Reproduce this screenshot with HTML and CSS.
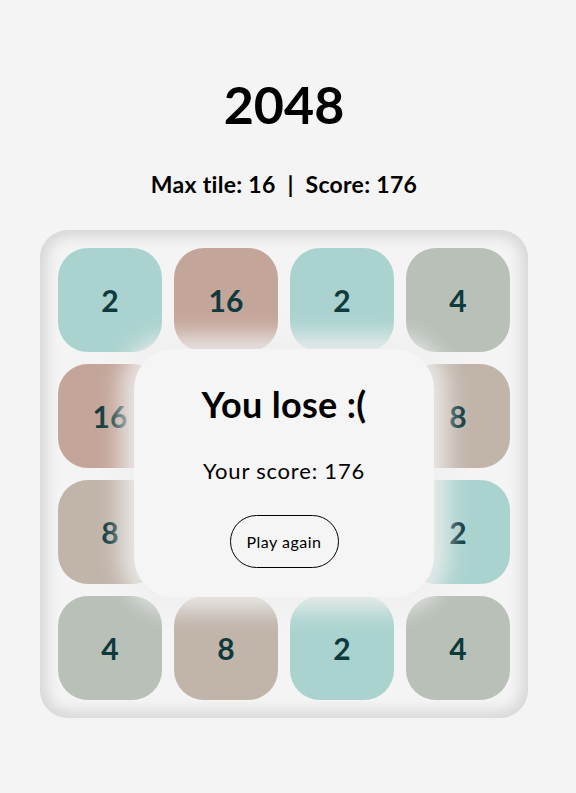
FILE: index.html
```html
<!DOCTYPE html>
<html>
<head>
<meta charset="utf-8">
<link rel="stylesheet" href="styles.css">
</head>
<body>
<main class="app">
  <h1 class="title">2048</h1>
  <p class="stats">Max tile: 16&nbsp;&nbsp;|&nbsp;&nbsp;Score: 176</p>
  <div class="board">
    <div class="grid">
      <div class="tile t2">2</div>
      <div class="tile t16">16</div>
      <div class="tile t2">2</div>
      <div class="tile t4">4</div>
      <div class="tile t16">16</div>
      <div class="tile t8">8</div>
      <div class="tile t2">2</div>
      <div class="tile t8">8</div>
      <div class="tile t8">8</div>
      <div class="tile t4">4</div>
      <div class="tile t16">16</div>
      <div class="tile t2">2</div>
      <div class="tile t4">4</div>
      <div class="tile t8">8</div>
      <div class="tile t2">2</div>
      <div class="tile t4">4</div>
    </div>
    <div class="modal">
      <h2 class="modal-title">You lose :(</h2>
      <p class="modal-score">Your score: 176</p>
      <button class="again">Play again</button>
    </div>
  </div>
</main>
</body>
</html>
```
FILE: styles.css
```css
html, body {
  margin: 0;
  padding: 0;
  background: #f4f4f4;
}
body {
  font-family: "Lato", "Noto Sans", sans-serif;
  color: #000;
}
.app {
  width: 568px;
  display: flex;
  flex-direction: column;
  align-items: center;
}
.title {
  margin: 72px 0 0;
  font-size: 52px;
  line-height: 64px;
  font-weight: 700;
}
.stats {
  margin: 34px 0 0;
  font-size: 23px;
  line-height: 28px;
  font-weight: 700;
  letter-spacing: 0.3px;
}
.board {
  position: relative;
  margin-top: 32px;
  width: 488px;
  height: 488px;
  box-sizing: border-box;
  padding: 18px;
  border-radius: 28px;
  background: #f4f4f4;
  box-shadow: inset 0 0 16px 5px rgba(0,0,0,0.14);
}
.grid {
  display: grid;
  grid-template-columns: repeat(4, 104px);
  grid-template-rows: repeat(4, 104px);
  gap: 12px;
}
.tile {
  border-radius: 30px;
  display: flex;
  align-items: center;
  justify-content: center;
  font-size: 30px;
  font-weight: 700;
  color: #0f3a3d;
}
.t2 { background: #aad3cf; }
.t4 { background: #b9c0b8; }
.t8 { background: #c1b5aa; }
.t16 { background: #c4a59a; }
.modal {
  position: absolute;
  left: 94px;
  top: 119px;
  width: 300px;
  height: 248px;
  box-sizing: border-box;
  border-radius: 40px;
  background: #f5f5f5;
  box-shadow: 0 0 22px 14px rgba(238,238,238,0.85);
  display: flex;
  flex-direction: column;
  align-items: center;
}
.modal-title {
  margin: 34px 0 0;
  font-size: 36px;
  line-height: 42px;
  font-weight: 700;
  letter-spacing: 0.3px;
}
.modal-score {
  margin: 32px 0 0;
  font-size: 22px;
  line-height: 28px;
  font-weight: 400;
  letter-spacing: 0.8px;
}
.again {
  margin-top: 30px;
  width: 109px;
  height: 53px;
  border: 1px solid #000;
  border-radius: 27px;
  background: transparent;
  font-family: inherit;
  font-size: 16px;
  letter-spacing: 0.5px;
  color: #000;
  padding: 0;
}
```
